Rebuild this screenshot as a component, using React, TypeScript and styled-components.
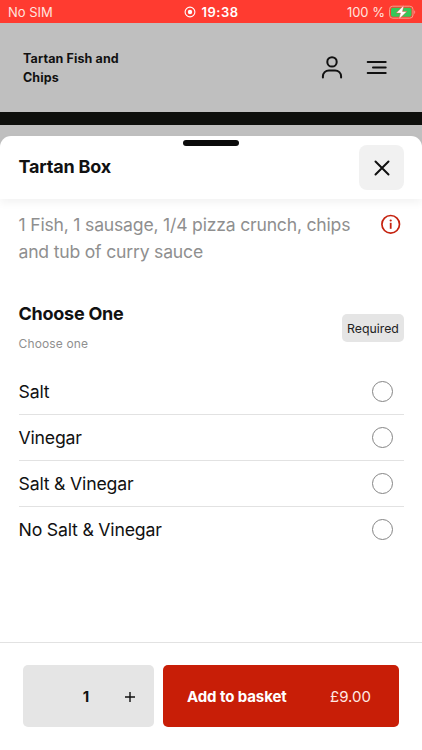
import React, { useState } from "react";
import styled, { createGlobalStyle } from "styled-components";

const GlobalStyle = createGlobalStyle`
  *, *::before, *::after { box-sizing: border-box; }
  body { margin: 0; background: #bfbfbf; font-family: Inter, "Liberation Sans", sans-serif; color: #111; }
  button { font: inherit; color: inherit; border: 0; padding: 0; margin: 0; cursor: pointer; }
  h1, h2, h3, p, ul { margin: 0; padding: 0; }
  svg { display: block; flex: none; }
`;

const Screen = styled.div`
  width: 422px;
  height: 750px;
  display: flex;
  flex-direction: column;
  overflow: hidden;
  background: #bfbfbf;
`;

const StatusBar = styled.div`
  flex: none;
  height: 23px;
  display: grid;
  grid-template-columns: 1fr auto 1fr;
  align-items: center;
  padding: 1px 6px 0 8px;
  background: #ff3b30;
  color: #ffe3df;
  font-size: 13px;
  line-height: 20px;
`;

const Carrier = styled.span`
  letter-spacing: 0;
`;

const Clock = styled.span`
  display: flex;
  align-items: center;
  gap: 5px;
  padding-right: 1px;
  color: #fff;
  font-weight: 600;
  letter-spacing: 0.5px;
`;

const Battery = styled.span`
  display: flex;
  align-items: center;
  justify-content: flex-end;
  gap: 4px;
`;

const Header = styled.header`
  flex: none;
  height: 89px;
  display: flex;
  align-items: center;
  justify-content: space-between;
  padding: 0 34px 0 23px;
`;

const ShopName = styled.h1`
  width: 130px;
  font-size: 12.5px;
  line-height: 19px;
  font-weight: 700;
  letter-spacing: 0.12px;
`;

const HeaderActions = styled.nav`
  display: flex;
  align-items: center;
  gap: 22px;
`;

const IconButton = styled.button`
  background: none;
`;

const HeroStrip = styled.div`
  flex: none;
  height: 13px;
  margin-bottom: 11px;
  background: #0e0f0c;
`;

const Sheet = styled.section`
  flex: 1;
  display: flex;
  flex-direction: column;
  background: #fff;
  border-radius: 11px 11px 0 0;
`;

const SheetHeader = styled.div`
  flex: none;
  height: 63px;
  display: grid;
  grid-template-columns: 1fr auto 1fr;
  padding: 4px 18px 0 18.5px;
  border-radius: 11px 11px 0 0;
  box-shadow: 0 4px 9px rgba(0, 0, 0, 0.05);
`;

const DragHandle = styled.div`
  width: 56px;
  height: 6px;
  border-radius: 3px;
  background: #0b0b0b;
`;

const SheetTitle = styled.h2`
  margin-top: 13px;
  font-size: 18px;
  line-height: 27px;
  font-weight: 700;
  letter-spacing: -0.2px;
`;

const CloseButton = styled.button`
  justify-self: end;
  width: 45px;
  height: 45px;
  margin-top: 5px;
  display: grid;
  place-items: center;
  border-radius: 8px;
  background: #f1f1f1;
`;

const SheetBody = styled.div`
  flex: 1;
  padding: 12px 18px 0 18.5px;
`;

const DescriptionRow = styled.div`
  display: flex;
  justify-content: space-between;
  align-items: flex-start;
  padding-right: 3px;
`;

const Description = styled.p`
  width: 345px;
  font-size: 17.6px;
  line-height: 27px;
  letter-spacing: -0.2px;
  color: #8f8f8f;
`;

const InfoButton = styled(IconButton)`
  margin-top: 3px;
`;

const GroupHeader = styled.div`
  display: flex;
  justify-content: space-between;
  align-items: center;
  margin-top: 34px;
  height: 56px;
`;

const GroupTitle = styled.h3`
  font-size: 18px;
  line-height: 25px;
  font-weight: 700;
  letter-spacing: -0.25px;
`;

const GroupHint = styled.p`
  margin-top: 8px;
  font-size: 12px;
  line-height: 20px;
  letter-spacing: 0.15px;
  color: #8f8f8f;
`;

const Badge = styled.span`
  margin-top: 2px;
  width: 62px;
  height: 28px;
  display: grid;
  place-items: center;
  border-radius: 5px;
  background: #e5e5e5;
  font-size: 12.3px;
  color: #222;
`;

const OptionList = styled.ul`
  margin-top: 14px;
  list-style: none;
`;

const Option = styled.li`
  height: 46px;
  border-bottom: 1px solid #e2e2e2;
  &:last-child { border-bottom-color: transparent; }
`;

const OptionLabel = styled.label`
  height: 45px;
  display: flex;
  align-items: center;
  justify-content: space-between;
  padding-right: 11.5px;
  font-size: 17.7px;
  letter-spacing: -0.2px;
  cursor: pointer;
`;

const Radio = styled.input`
  appearance: none;
  width: 21px;
  height: 21px;
  margin: 0;
  border: 1px solid #858585;
  border-radius: 50%;
  &:checked { border: 6px solid #c81e07; }
`;

const Footer = styled.footer`
  flex: none;
  height: 108px;
  display: flex;
  gap: 9px;
  padding: 22.4px 23px 0;
  border-top: 1px solid #e2e2e2;
`;

const Stepper = styled.div`
  width: 131px;
  height: 62px;
  display: grid;
  grid-template-columns: 40px 46px 45px;
  align-items: center;
  border-radius: 5px;
  background: #e5e5e5;
`;

const Quantity = styled.span`
  grid-column: 2;
  text-align: center;
  font-size: 15px;
  font-weight: 700;
`;

const StepButton = styled.button`
  height: 62px;
  display: grid;
  place-items: center;
  padding: 2px 3px 0 0;
  background: none;
`;

const AddButton = styled.button`
  flex: 1;
  height: 62px;
  display: flex;
  align-items: center;
  justify-content: space-between;
  padding: 0 28px 0 24px;
  border-radius: 5px;
  background: #c81e07;
  color: #fff;
  font-size: 15px;
`;

const AddLabel = styled.span`
  font-weight: 700;
  letter-spacing: -0.1px;
`;

const Price = styled.span`
  color: #ffe9e4;
`;

const options = ["Salt", "Vinegar", "Salt & Vinegar", "No Salt & Vinegar"];

export default function App() {
  const [selected, setSelected] = useState<string | null>(null);
  const [quantity, setQuantity] = useState(1);

  return (
    <Screen>
      <GlobalStyle />
      <StatusBar>
        <Carrier>No SIM</Carrier>
        <Clock>
          <svg width="12" height="12" viewBox="0 0 12 12">
            <circle cx="6" cy="6" r="4.9" fill="none" stroke="#fff" strokeWidth="1.1" />
            <circle cx="6" cy="6" r="2.2" fill="#fff" />
          </svg>
          19:38
        </Clock>
        <Battery>
          100 %
          <svg width="27" height="15" viewBox="0 0 27 15">
            <rect x="0.5" y="1.2" width="23.5" height="12" rx="3.2" fill="none" stroke="#f3a08a" />
            <rect x="2" y="2.7" width="20.5" height="9" rx="1.8" fill="#35c759" />
            <path d="M25.3 5.3c1.2.6 1.2 3.2 0 3.8z" fill="#ff9d97" />
            <path d="M14.9 0.3 7.2 8.1h4.3L9.9 14.2l8-7.7h-4.4z" fill="#fff" stroke="#ff3b30" strokeWidth="0.4" />
          </svg>
        </Battery>
      </StatusBar>
      <Header>
        <ShopName>Tartan Fish and Chips</ShopName>
        <HeaderActions>
          <IconButton aria-label="Account">
            <svg width="24" height="24" viewBox="0 0 24 24" fill="none" stroke="#111" strokeWidth="2" strokeLinecap="round">
              <circle cx="12" cy="5.9" r="4.7" />
              <path d="M2.9 21.4v-1a6 6 0 0 1 6-6h6.2a6 6 0 0 1 6 6v1" />
            </svg>
          </IconButton>
          <IconButton aria-label="Menu">
            <svg width="22" height="24" viewBox="0 0 22 24" fill="none" stroke="#111" strokeWidth="2" strokeLinecap="round">
              <path d="M1.7 6H19.7M7 11.6H19.7M1.7 17.1H19.7" />
            </svg>
          </IconButton>
        </HeaderActions>
      </Header>
      <HeroStrip />
      <Sheet>
        <SheetHeader>
          <SheetTitle>Tartan Box</SheetTitle>
          <DragHandle />
          <CloseButton aria-label="Close">
            <svg width="16" height="16" viewBox="0 0 16 16" fill="none" stroke="#111" strokeWidth="2" strokeLinecap="round">
              <path d="m1.5 1.5 13 13m0-13-13 13" />
            </svg>
          </CloseButton>
        </SheetHeader>
        <SheetBody>
          <DescriptionRow>
            <Description>1 Fish, 1 sausage, 1/4 pizza crunch, chips and tub of curry sauce</Description>
            <InfoButton aria-label="Allergen information">
              <svg width="20" height="20" viewBox="0 0 20 20" fill="none" stroke="#c5220f">
                <circle cx="9.7" cy="10.3" r="8.8" strokeWidth="1.7" />
                <path d="M9.7 8.8v6" strokeWidth="1.8" />
                <circle cx="9.7" cy="6.5" r="1.1" fill="#c5220f" stroke="none" />
              </svg>
            </InfoButton>
          </DescriptionRow>
          <GroupHeader>
            <div>
              <GroupTitle>Choose One</GroupTitle>
              <GroupHint>Choose one</GroupHint>
            </div>
            <Badge>Required</Badge>
          </GroupHeader>
          <OptionList>
            {options.map((option) => (
              <Option key={option}>
                <OptionLabel>
                  {option}
                  <Radio type="radio" name="topping" checked={selected === option} onChange={() => setSelected(option)} />
                </OptionLabel>
              </Option>
            ))}
          </OptionList>
        </SheetBody>
        <Footer>
          <Stepper>
            <Quantity>{quantity}</Quantity>
            <StepButton aria-label="Increase quantity" onClick={() => setQuantity(quantity + 1)}>
              <svg width="10" height="10" viewBox="0 0 10 10" stroke="#111" strokeWidth="1.4">
                <path d="M5 0v10M0 5h10" />
              </svg>
            </StepButton>
          </Stepper>
          <AddButton>
            <AddLabel>Add to basket</AddLabel>
            <Price>£{(9 * quantity).toFixed(2)}</Price>
          </AddButton>
        </Footer>
      </Sheet>
    </Screen>
  );
}
